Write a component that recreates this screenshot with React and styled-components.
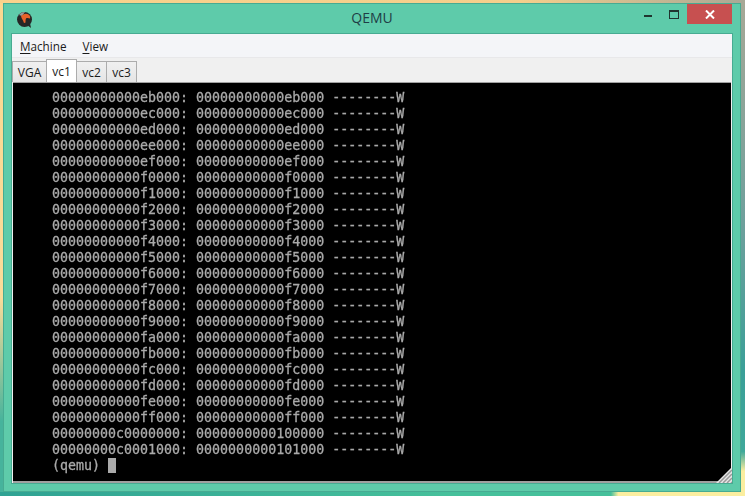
import styled, { createGlobalStyle } from "styled-components";

const GlobalStyle = createGlobalStyle`
  html, body {
    margin: 0;
    padding: 0;
    overflow: hidden;
  }
`;

const rows = [
  ["00000000000eb000", "00000000000eb000"],
  ["00000000000ec000", "00000000000ec000"],
  ["00000000000ed000", "00000000000ed000"],
  ["00000000000ee000", "00000000000ee000"],
  ["00000000000ef000", "00000000000ef000"],
  ["00000000000f0000", "00000000000f0000"],
  ["00000000000f1000", "00000000000f1000"],
  ["00000000000f2000", "00000000000f2000"],
  ["00000000000f3000", "00000000000f3000"],
  ["00000000000f4000", "00000000000f4000"],
  ["00000000000f5000", "00000000000f5000"],
  ["00000000000f6000", "00000000000f6000"],
  ["00000000000f7000", "00000000000f7000"],
  ["00000000000f8000", "00000000000f8000"],
  ["00000000000f9000", "00000000000f9000"],
  ["00000000000fa000", "00000000000fa000"],
  ["00000000000fb000", "00000000000fb000"],
  ["00000000000fc000", "00000000000fc000"],
  ["00000000000fd000", "00000000000fd000"],
  ["00000000000fe000", "00000000000fe000"],
  ["00000000000ff000", "00000000000ff000"],
  ["00000000c0000000", "0000000000100000"],
  ["00000000c0001000", "0000000000101000"],
];

// the wallpaper only shows in a thin strip round the window
const Desktop = styled.div`
  width: 745px;
  height: 496px;
  box-sizing: border-box;
  padding: 3px 4px 4px 3px;
  background:
    linear-gradient(90deg, #2fa293 0%, #46c09b 60%, #46c09b 82%, #fbeea0 83%) bottom / 100% 4px no-repeat,
    linear-gradient(180deg, #a8a896 0%, #6f9f9c 45%, #3a9f98 75%, #3fa89a 91%, #fbeea0 95%) right / 4px 100% no-repeat,
    linear-gradient(90deg, #fad28c 0%, #f5cf8c 70%, #a8a896 100%) top / 100% 3px no-repeat,
    linear-gradient(180deg, #fbd890 0%, #fbdc9a 60%, #46b39c 85%) left / 3px 100% no-repeat;
`;

const Window = styled.div`
  height: 100%;
  box-sizing: border-box;
  border: 1px solid #47ab92;
  background: #5ecbaa;
  padding: 0 7px 7px 7px;
  display: flex;
  flex-direction: column;
  font-family: "Open Sans", "Noto Sans", sans-serif;
`;

const TitleBar = styled.div`
  height: 29px;
  flex: none;
  display: flex;
  align-items: flex-start;
  position: relative;
`;

const AppIcon = styled.svg`
  width: 18px;
  height: 18px;
  margin: 7px 0 0 5px;
`;

const Title = styled.div`
  position: absolute;
  left: 0;
  right: 0;
  top: 4px;
  text-align: center;
  font-size: 14px;
  line-height: 20px;
  color: #1f3d46;
`;

const Controls = styled.div`
  margin-left: auto;
  margin-right: 1px;
  display: flex;
  align-items: flex-start;
  position: relative;
`;

const ControlButton = styled.div`
  width: ${({ $wide }) => ($wide ? "45px" : "26px")};
  height: 20px;
  display: flex;
  align-items: center;
  justify-content: center;
  background: ${({ $wide }) => ($wide ? "#c75050" : "transparent")};
`;

const MinGlyph = styled.div`
  width: 8px;
  height: 2px;
  background: #20352f;
  margin-top: 3px;
`;

const MaxGlyph = styled.div`
  width: 8px;
  height: 6px;
  border: 1px solid #20352f;
  border-top-width: 2px;
`;

const Client = styled.div`
  flex: 1;
  min-height: 0;
  display: flex;
  flex-direction: column;
  position: relative;
  background: #f0f0f0;
  border: 1px solid #47ab92;
`;

const MenuBar = styled.div`
  height: 23px;
  flex: none;
  display: flex;
  align-items: center;
  gap: 16px;
  padding-left: 8px;
  background: #f4f5f8;
  border-bottom: 1px solid #e8e8ea;
  font-size: 11.7px;
  color: #1a1a1a;
`;

const MenuItem = styled.span`
  u {
    text-underline-offset: 2px;
  }
`;

const TabRow = styled.div`
  height: 24px;
  flex: none;
  display: flex;
  align-items: flex-end;
  background: #f0f0f0;
`;

const Tab = styled.div`
  box-sizing: border-box;
  height: ${({ $active }) => ($active ? "23px" : "21px")};
  width: ${({ $first }) => ($first ? "35px" : "31px")};
  margin-left: ${({ $first }) => ($first ? "0" : "-1px")};
  display: flex;
  align-items: center;
  justify-content: center;
  border: 1px solid #acacac;
  border-bottom: none;
  background: ${({ $active }) =>
    $active ? "#fff" : "linear-gradient(180deg, #f0f0f0, #e5e5e5)"};
  font-size: 12px;
  color: #1a1a1a;
  position: relative;
  z-index: ${({ $active }) => ($active ? 1 : 0)};
`;

const Screen = styled.div`
  flex: 1;
  min-height: 0;
  margin-left: 1px;
  margin-right: 1px;
  background: #000;
  border-top: 1px solid #a0a0a0;
  border-bottom: 2px solid #a0a0a0;
  box-sizing: border-box;
  padding: 7px 0 0 39px;
  overflow: hidden;
`;

const Console = styled.div`
  font-family: "DejaVu Sans Mono", monospace;
  font-size: 13.3px;
  line-height: 16px;
  color: #aaa;
  white-space: pre;
  will-change: transform;
  -webkit-text-stroke: 0.3px #aaa;
`;

const Row = styled.div`
  height: 16px;
`;

const Cursor = styled.span`
  display: inline-block;
  width: 8px;
  height: 15px;
  background: #aaa;
  vertical-align: -3px;
`;

const Grip = styled.svg`
  position: absolute;
  right: 0;
  bottom: 0;
  width: 16px;
  height: 16px;
`;

export default function App() {
  return (
    <Desktop>
      <GlobalStyle />
      <Window>
        <TitleBar>
          <AppIcon viewBox="0 0 18 18">
            <circle cx="8.5" cy="8.5" r="7.5" fill="#262626" />
            <path d="M11 14l4 3-1-5z" fill="#262626" />
            <path d="M3 4a7 7 0 0 1 6-3l-3 4z" fill="#9a9a9a" />
            <path
              d="M5 5.5c1.500-2.500 5-3.500 7.500-2 1.500.8 2 2.500 1.500 4-1.200-.6-2.500-.8-3.500-.4-1 .8-1 2.400-1 4.400-.6.500-1.200.500-1.800 0C7.500 9.500 5.800 8 5 5.500z"
              fill="#e8622a"
            />
          </AppIcon>
          <Title>QEMU</Title>
          <Controls>
            <ControlButton>
              <MinGlyph />
            </ControlButton>
            <ControlButton>
              <MaxGlyph />
            </ControlButton>
            <ControlButton $wide>
              <svg width="10" height="9" viewBox="0 0 10 9">
                <path d="M1 .5l8 8M9 .5l-8 8" stroke="#fff" strokeWidth="2" />
              </svg>
            </ControlButton>
          </Controls>
        </TitleBar>
        <Client>
          <MenuBar>
            <MenuItem>
              <u>M</u>achine
            </MenuItem>
            <MenuItem>
              <u>V</u>iew
            </MenuItem>
          </MenuBar>
          <TabRow>
            <Tab $first>VGA</Tab>
            <Tab $active>vc1</Tab>
            <Tab>vc2</Tab>
            <Tab>vc3</Tab>
          </TabRow>
          <Screen>
            <Console>
              {rows.map(([virt, phys]) => (
                <Row key={virt}>{`${virt}: ${phys} --------W`}</Row>
              ))}
              <Row>
                {"(qemu) "}
                <Cursor />
              </Row>
            </Console>
          </Screen>
          <Grip viewBox="0 0 16 16">
            <path d="M16 0V16H0z" fill="#e8e8e8" />
            <path
              d="M16 3L3 16M16 7L7 16M16 11L11 16M16 15L15 16"
              stroke="#999"
              strokeWidth="1.500"
            />
          </Grip>
        </Client>
      </Window>
    </Desktop>
  );
}
